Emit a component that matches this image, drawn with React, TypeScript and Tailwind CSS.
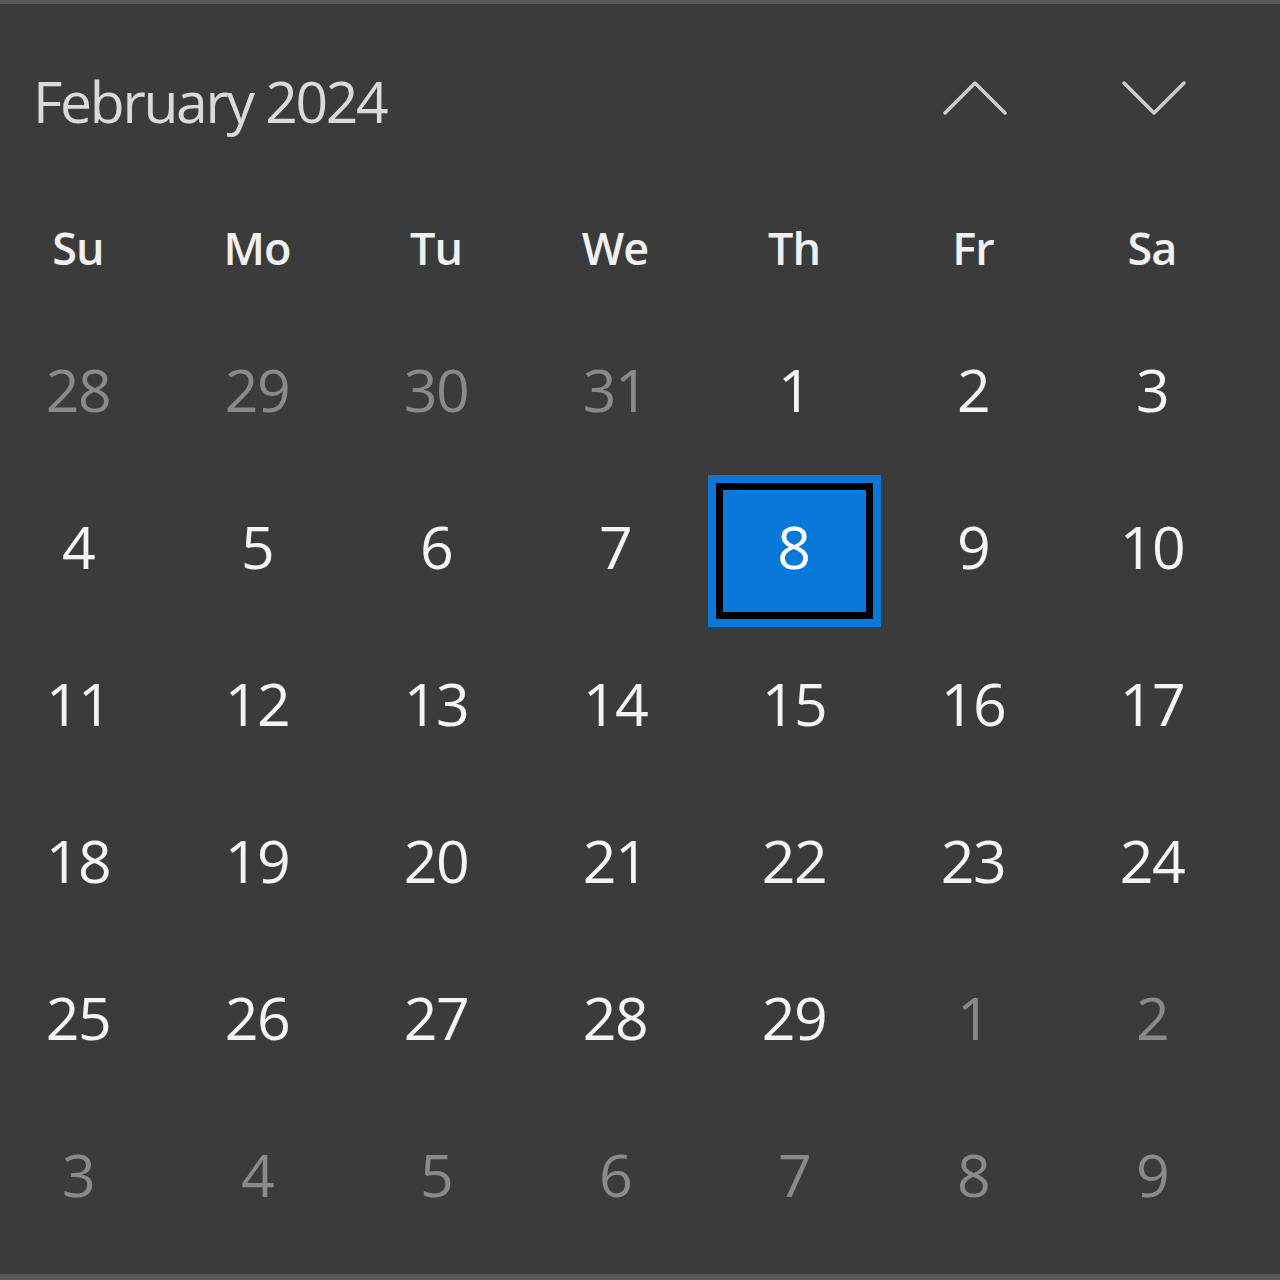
const weekdays = ["Su", "Mo", "Tu", "We", "Th", "Fr", "Sa"];

type Day = { n: number; muted?: boolean; selected?: boolean };

const days: Day[] = [
  ...[28, 29, 30, 31].map((n) => ({ n, muted: true })),
  ...Array.from({ length: 29 }, (_, i) => ({ n: i + 1, selected: i + 1 === 8 })),
  ...[1, 2, 3, 4, 5, 6, 7, 8, 9].map((n) => ({ n, muted: true })),
];

function Chevron({ up }: { up?: boolean }) {
  return (
    <svg width="64" height="36" viewBox="0 0 64 36" fill="none">
      <polyline
        points={up ? "2,33 32,3 62,33" : "2,3 32,33 62,3"}
        stroke="#cdcdcd"
        strokeWidth="3.5"
        strokeLinecap="round"
        strokeLinejoin="round"
      />
    </svg>
  );
}

export default function App() {
  return (
    <div className="flex h-[1280px] w-[1280px] flex-col overflow-hidden bg-[#3b3b3b] font-['Open_Sans',sans-serif]">
      <div className="h-[4px] bg-[#5a5a5a]" />
      <div className="flex h-[196px] items-center pr-[37px]">
        <span className="flex-1 pl-[33px] text-[57px] tracking-[-2.3px] text-[#dadada]">February 2024</span>
        <div className="flex w-[179px] justify-center pb-[8px]">
          <Chevron up />
        </div>
        <div className="flex w-[179px] justify-center pb-[8px]">
          <Chevron />
        </div>
      </div>
      <div className="ml-[-11.5px] grid h-[96px] grid-cols-[repeat(7,179px)] items-center">
        {weekdays.map((d) => (
          <div key={d} className="text-center text-[45px] font-semibold tracking-[-1px] text-[#f0f0f0]">
            {d}
          </div>
        ))}
      </div>
      <div className="ml-[-11.5px] mt-[15px] grid grid-cols-[repeat(7,179px)] auto-rows-[157px]">
        {days.map((d, i) => (
          <div key={i} className="flex items-center justify-center">
            {d.selected ? (
              <div className="mt-[8px] flex h-[152px] w-[173px] shrink-0 items-center justify-center border-[8px] border-[#0a78d8] bg-black p-[7px]">
                <div className="flex h-full w-full items-center justify-center bg-[#0a78d8] pb-[8px] text-[59px] text-white">
                  {d.n}
                </div>
              </div>
            ) : (
              <span className={`text-[59px] tracking-[-1.5px] ${d.muted ? "text-[#8a8a8a]" : "text-[#f4f4f4]"}`}>
                {d.n}
              </span>
            )}
          </div>
        ))}
      </div>
      <div className="mt-auto h-[6px] bg-[#5a5a5a]" />
    </div>
  );
}
